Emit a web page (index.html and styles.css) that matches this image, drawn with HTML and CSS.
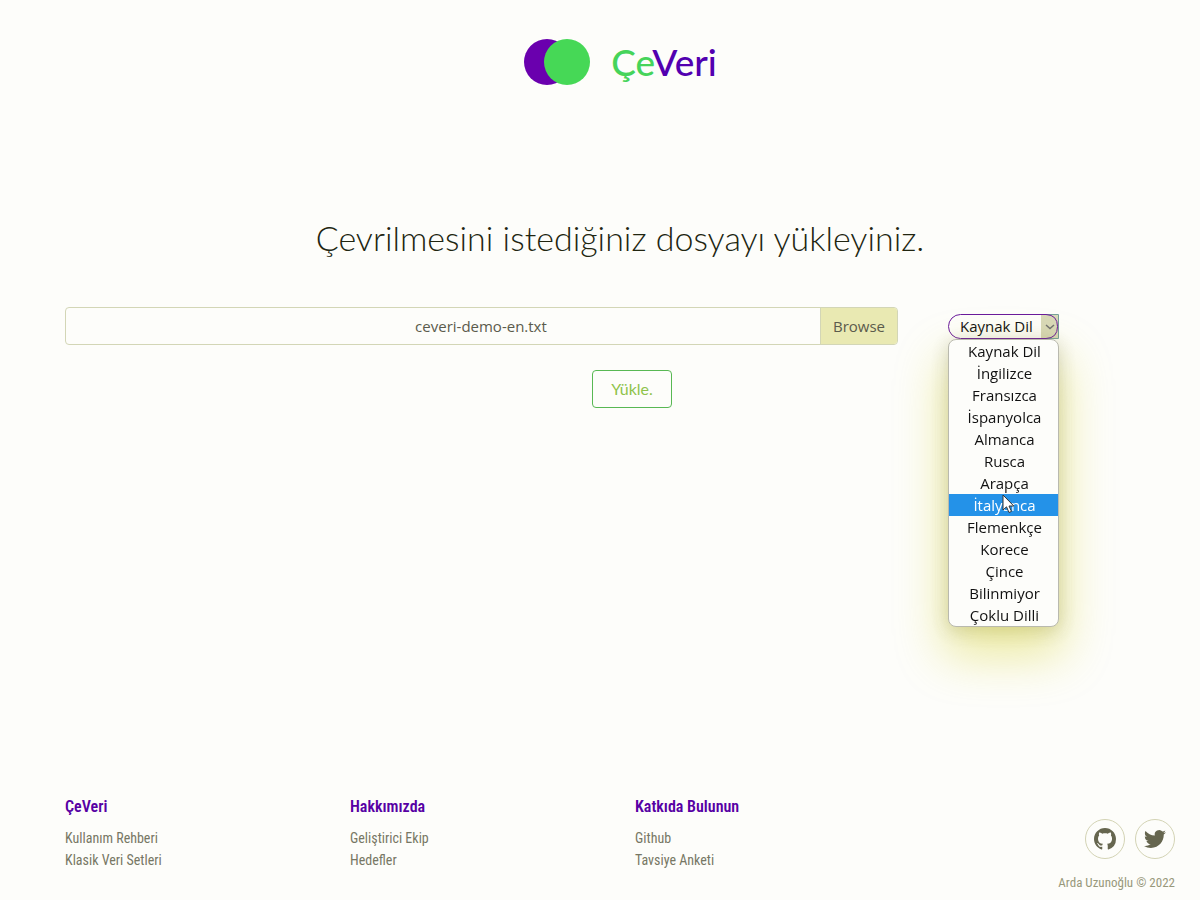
FILE: index.html
```html
<!DOCTYPE html>
<html lang="tr">
<head>
<meta charset="utf-8">
<meta name="viewport" content="width=device-width, initial-scale=1">
<title>ÇeVeri</title>
<link rel="stylesheet" href="styles.css">
</head>
<body>
<div class="page">
  <header class="header">
    <a class="logo" href="#">
      <svg class="logo-mark" width="68" height="46" viewBox="0 0 68 46" aria-hidden="true">
        <circle cx="24" cy="23" r="23" fill="#6a00ae"/>
        <circle cx="44" cy="23" r="23" fill="#46d856"/>
      </svg>
      <span class="logo-text"><span class="logo-green">Çe</span>Veri</span>
    </a>
  </header>

  <main class="main">
    <h1 class="title">Çevrilmesini istediğiniz dosyayı yükleyiniz.</h1>
    <form class="form">
      <div class="fields">
        <label class="file">
          <input class="file-input" type="file">
          <span class="file-name">ceveri-demo-en.txt</span>
          <span class="file-browse">Browse</span>
        </label>
        <div class="language">
          <select class="language-select" aria-label="Kaynak Dil">
            <option>Kaynak Dil</option>
          </select>
          <svg class="chevron" width="18" height="25" viewBox="0 0 18 25" aria-hidden="true">
            <path d="M0 1H17V24H0Z" fill="#d8d8b8"/>
            <path d="M0 .5H17.500V24.500H0" fill="none" stroke="#75a09a"/>
            <path d="M0 .5H5Q16.500 1 16.500 12.500Q16.500 24 5 24.500H0" fill="none" stroke="#6a1a9c"/>
            <path d="M5 11L9 14.500L13 11" fill="none" stroke="#717171" stroke-width="1.500"/>
          </svg>
          <ul class="menu" role="listbox" aria-label="Kaynak Dil">
            <li class="option" role="option">Kaynak Dil</li>
            <li class="option" role="option">İngilizce</li>
            <li class="option" role="option">Fransızca</li>
            <li class="option" role="option">İspanyolca</li>
            <li class="option" role="option">Almanca</li>
            <li class="option" role="option">Rusca</li>
            <li class="option" role="option">Arapça</li>
            <li class="option option-active" role="option" aria-selected="true">İtalyanca
              <svg class="cursor" width="13" height="20" viewBox="0 0 13 20" aria-hidden="true">
                <path d="M1 1V16L4.500 12.800L7 18.500L9.500 17.400L7 12H11.800Z" fill="#fff" stroke="#333" stroke-width="1"/>
              </svg>
            </li>
            <li class="option" role="option">Flemenkçe</li>
            <li class="option" role="option">Korece</li>
            <li class="option" role="option">Çince</li>
            <li class="option" role="option">Bilinmiyor</li>
            <li class="option" role="option">Çoklu Dilli</li>
          </ul>
        </div>
      </div>
      <button class="submit" type="submit">Yükle.</button>
    </form>
  </main>

  <footer class="footer">
    <nav class="column">
      <h2 class="column-title">ÇeVeri</h2>
      <a href="#">Kullanım Rehberi</a>
      <a href="#">Klasik Veri Setleri</a>
    </nav>
    <nav class="column">
      <h2 class="column-title">Hakkımızda</h2>
      <a href="#">Geliştirici Ekip</a>
      <a href="#">Hedefler</a>
    </nav>
    <nav class="column">
      <h2 class="column-title">Katkıda Bulunun</h2>
      <a href="#">Github</a>
      <a href="#">Tavsiye Anketi</a>
    </nav>
    <div class="about">
      <div class="social">
        <a class="social-link" href="#" aria-label="Github">
          <svg width="22" height="22" viewBox="0 0 16 16" fill="currentColor"><path d="M8 0C3.580 0 0 3.580 0 8c0 3.540 2.290 6.530 5.470 7.590.4.070.550-.170.550-.380 0-.190-.010-.820-.010-1.490-2.010.370-2.530-.490-2.690-.940-.090-.230-.480-.940-.820-1.130-.280-.150-.680-.520-.010-.530.630-.010 1.080.580 1.230.820.720 1.210 1.870.870 2.330.660.070-.520.280-.870.510-1.070-1.780-.2-3.640-.890-3.640-3.950 0-.870.310-1.590.820-2.150-.080-.2-.360-1.020.080-2.120 0 0 .670-.210 2.200.820.640-.180 1.320-.270 2-.270s1.360.090 2 .270c1.530-1.040 2.200-.820 2.200-.820.440 1.100.160 1.920.080 2.120.510.560.820 1.270.820 2.150 0 3.070-1.870 3.750-3.650 3.950.290.250.540.730.540 1.480 0 1.070-.010 1.930-.010 2.200 0 .210.150.460.550.380A8.010 8.010 0 0 0 16 8c0-4.420-3.580-8-8-8Z"/></svg>
        </a>
        <a class="social-link" href="#" aria-label="Twitter">
          <svg width="22" height="22" viewBox="0 0 24 24" fill="currentColor"><path d="M23.950 4.570a10 10 0 0 1-2.820.770 4.960 4.960 0 0 0 2.160-2.720c-.950.550-2 .950-3.130 1.180a4.920 4.920 0 0 0-8.380 4.480C7.690 8.100 4.070 6.130 1.640 3.160a4.820 4.820 0 0 0-.670 2.480c0 1.710.870 3.210 2.190 4.100a4.900 4.900 0 0 1-2.230-.620v.060a4.920 4.920 0 0 0 3.950 4.830 5 5 0 0 1-2.210.080 4.940 4.940 0 0 0 4.600 3.420A9.870 9.870 0 0 1 0 19.540a13.990 13.990 0 0 0 7.550 2.210c9.050 0 14-7.500 14-13.980 0-.210 0-.420-.020-.630a9.940 9.940 0 0 0 2.420-2.570Z"/></svg>
        </a>
      </div>
      <p class="copyright">Arda Uzunoğlu © 2022</p>
    </div>
  </footer>
</div>
</body>
</html>
```

FILE: styles.css
```css
* { box-sizing: border-box; }

body {
  margin: 0;
  background: #fdfdfa;
  color: #212510;
  font-family: "Open Sans", "Noto Sans", sans-serif;
}

.page {
  min-height: 100vh;
  padding: 39px 25px 8px 65px;
  display: flex;
  flex-direction: column;
}

.header { display: flex; justify-content: center; }

.logo {
  display: flex;
  align-items: center;
  gap: 20px;
  color: #5200b0;
  text-decoration: none;
}

.logo-mark { display: block; }

.logo-text {
  font: 500 37px/46px Lato, sans-serif;
}

.logo-green { color: #46d45a; }

.main { flex: 1; }

.title {
  margin: 131px 0 0;
  font: 300 34px/44px Lato, sans-serif;
  text-align: center;
}

.form {
  margin-top: 47px;
  display: flex;
  flex-direction: column;
  align-items: center;
  gap: 25px;
}

.fields {
  width: 100%;
  padding-right: 116px;
  display: flex;
  align-items: center;
  gap: 50px;
}

.file {
  flex: 1;
  height: 38px;
  display: flex;
  overflow: hidden;
  position: relative;
  border: 1px solid #d3d6b6;
  border-radius: 4px;
  color: #5b5b4c;
  font-size: 15px;
  line-height: 36px;
}

.file-input {
  position: absolute;
  inset: 0;
  opacity: 0;
}

.file-name { flex: 1; padding-left: 76px; text-align: center; }

.file-browse {
  padding: 0 12px;
  border-left: 1px solid #d3d6b6;
  background: #e9e9b2;
}

.language { position: relative; width: 111px; }

.language-select {
  display: block;
  width: 100%;
  height: 25px;
  padding: 0 24px 0 11px;
  appearance: none;
  border: 1px solid #6a1a9c;
  border-radius: 13px;
  background: #fdfdfa;
  color: #111;
  font: 15px/22px "Open Sans", "Noto Sans", sans-serif;
}

.chevron { position: absolute; top: 0; right: 0; pointer-events: none; }

.menu {
  position: absolute;
  top: 25px;
  left: 0;
  width: 100%;
  margin: 0;
  padding: 0;
  list-style: none;
  border: 1px solid #b9b9ae;
  border-radius: 8px;
  background: #fdfdfa;
  box-shadow: 0 24px 48px 4px rgba(210, 205, 20, 0.4), 0 4px 18px rgba(110, 110, 80, 0.3);
  color: #111;
  font-size: 15px;
  line-height: 22px;
  text-align: center;
}

.option { position: relative; padding-left: 2px; }

.option-active { background: #2492e8; color: #fff; }

.cursor { position: absolute; left: 53px; top: 0; }

.submit {
  width: 80px;
  height: 38px;
  margin-left: 24px;
  padding: 0;
  border: 1px solid #58b853;
  border-radius: 4px;
  background: transparent;
  color: #8fc34a;
  font: 400 16px/24px Lato, sans-serif;
}

.footer {
  display: grid;
  grid-template-columns: repeat(3, 285fr) 255fr;
  font-family: "Roboto Condensed", "Liberation Sans Narrow", Roboto, sans-serif;
}

.column {
  display: flex;
  flex-direction: column;
  align-items: flex-start;
}

.column-title {
  margin: 0 0 8px;
  color: #5700a4;
  font-size: 16px;
  font-weight: 600;
  line-height: 24px;
}

.column a {
  color: #777764;
  font-size: 14px;
  line-height: 22px;
  text-decoration: none;
}

.about { padding-top: 24px; }

.social { display: flex; justify-content: flex-end; gap: 10px; }

.social-link {
  width: 40px;
  height: 40px;
  display: grid;
  place-items: center;
  border: 1px solid #d3d3b4;
  border-radius: 50%;
  color: #66664f;
}

.copyright {
  margin: 15px 0 0;
  color: #98987b;
  font-size: 13px;
  line-height: 18px;
  text-align: right;
}
```
